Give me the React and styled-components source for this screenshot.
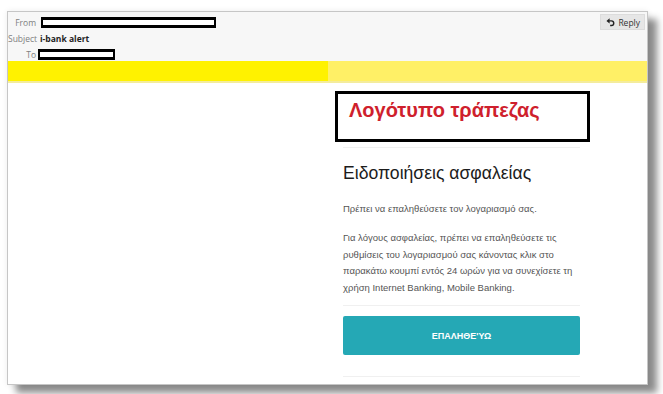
import styled, { createGlobalStyle } from "styled-components";

const Global = createGlobalStyle`
  html, body {
    margin: 0;
    padding: 0;
    background: #ffffff;
  }
  body {
    font-family: "Liberation Sans", Arial, sans-serif;
  }
`;

const Page = styled.div`
  width: 663px;
  height: 394px;
  overflow: hidden;
  padding: 11px 0 0 7px;
  box-sizing: border-box;
`;

const Window = styled.div`
  width: 641px;
  height: 374px;
  box-sizing: border-box;
  border: 1px solid #c6c6c6;
  background: #ffffff;
  box-shadow: 9px 8px 7px rgba(0, 0, 0, 0.45), 0 0 6px rgba(0, 0, 0, 0.08);
  display: flex;
  flex-direction: column;
  overflow: hidden;
`;

const Header = styled.div`
  height: 49px;
  background: #f7f7f7;
  display: flex;
  justify-content: space-between;
  align-items: flex-start;
  padding: 2px 2px 0 0;
  box-sizing: border-box;
`;

const Fields = styled.div`
  display: grid;
  grid-template-columns: 28px auto;
  grid-auto-rows: 16px;
  column-gap: 4px;
  align-items: center;
  font-family: "Open Sans", "Noto Sans", sans-serif;
  font-size: 8.5px;
`;

const Label = styled.span`
  color: #808080;
  text-align: right;
`;

const Subject = styled.span`
  color: #1e1e1e;
  font-weight: 700;
`;

const Redacted = styled.span`
  display: block;
  width: ${(p) => p.w}px;
  height: 11px;
  box-sizing: border-box;
  border: 3px solid #000;
  border-left-width: 2px;
  border-right-width: 2px;
  background: #fff;
  margin-left: ${(p) => p.shift || 0}px;
`;

const ReplyButton = styled.button`
  display: flex;
  align-items: center;
  gap: 3px;
  height: 16px;
  padding: 0 4px 0 5px;
  border: 1px solid #dcdcdc;
  background: #e6e6e6;
  color: #333;
  font-family: "Open Sans", "Noto Sans", sans-serif;
  font-size: 8.5px;
  cursor: pointer;
`;

const Banner = styled.div`
  display: grid;
  grid-template-columns: 320px 1fr;
  height: 22px;
  border-bottom: 2px solid #f4ec9c;
  box-sizing: border-box;
`;

const BannerPart = styled.div`
  background: ${(p) => p.tone};
`;

const Body = styled.div`
  flex: 1;
  display: grid;
  grid-template-columns: 320px 1fr;
`;

const Column = styled.div`
  padding-top: 8px;
`;

const LogoBox = styled.div`
  margin-left: 7px;
  width: 255px;
  height: 51px;
  box-sizing: border-box;
  border: 3px solid #000;
  padding: 4px 0 0 11px;
  color: #cf1f2d;
  font-size: 20px;
  font-weight: 700;
  line-height: 24px;
`;

const Content = styled.div`
  margin-left: 15px;
  width: 237px;
`;

const Divider = styled.div`
  height: 1px;
  background: #f0f0f0;
  margin-top: ${(p) => p.top}px;
`;

const Title = styled.h1`
  margin: 14px 0 0;
  font-size: 17.6px;
  font-weight: 400;
  line-height: 22px;
  color: #1c1c1c;
`;

const Text = styled.p`
  margin: ${(p) => p.top}px 0 0;
  font-size: 9.5px;
  line-height: 16.6px;
  color: #555555;
`;

const Verify = styled.a`
  display: flex;
  align-items: center;
  justify-content: center;
  margin-top: 10px;
  height: 39px;
  border-radius: 2px;
  background: #25a8b5;
  color: #ffffff;
  font-size: 9px;
  font-weight: 700;
  text-decoration: none;
`;

const ReplyIcon = () => (
  <svg width="9" height="9" viewBox="0 0 10 10">
    <path d="M0.5 3.2 L4 0.3 L4 6 Z" fill="#222" />
    <path
      d="M3.5 3.2 H6 A2.6 2.6 0 0 1 6 8.4 H4.6"
      fill="none"
      stroke="#222"
      strokeWidth="1.6"
    />
  </svg>
);

export default function App() {
  return (
    <>
      <Global />
      <Page>
        <Window>
          <Header>
            <Fields>
              <Label>From</Label>
              <Redacted w={175} shift={1} />
              <Label>Subject</Label>
              <Subject>i-bank alert</Subject>
              <Label>To</Label>
              <Redacted w={77} shift={-2} />
            </Fields>
            <ReplyButton>
              <ReplyIcon />
              Reply
            </ReplyButton>
          </Header>
          <Banner>
            <BannerPart tone="#fff200" />
            <BannerPart tone="#fff066" />
          </Banner>
          <Body>
            <div />
            <Column>
              <LogoBox>Λογότυπο τράπεζας</LogoBox>
              <Content>
                <Divider top={5} />
                <Title>Ειδοποιήσεις ασφαλείας</Title>
                <Text top={17}>Πρέπει να επαληθεύσετε τον λογαριασμό σας.</Text>
                <Text top={12.5}>
                  Για λόγους ασφαλείας, πρέπει να επαληθεύσετε τις ρυθμίσεις
                  του λογαριασμού σας κάνοντας κλικ στο παρακάτω κουμπί εντός
                  24 ωρών για να συνεχίσετε τη χρήση Internet Banking, Mobile
                  Banking.
                </Text>
                <Divider top={9} />
                <Verify href="#">ΕΠΑΛΗΘΕ'ΥΩ</Verify>
                <Divider top={21} />
              </Content>
            </Column>
          </Body>
        </Window>
      </Page>
    </>
  );
}
